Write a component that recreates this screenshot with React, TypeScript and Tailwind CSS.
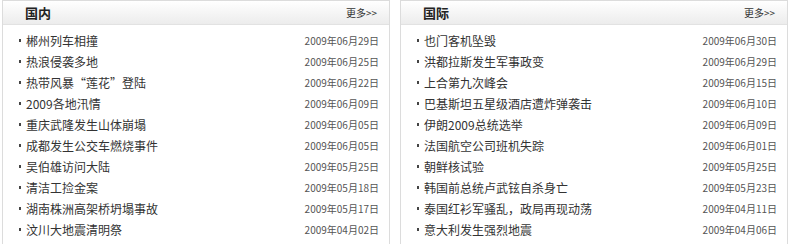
const guonei: [string, string][] = [
  ['郴州列车相撞', '2009年06月29日'],
  ['热浪侵袭多地', '2009年06月25日'],
  ['热带风暴“莲花”登陆', '2009年06月22日'],
  ['2009各地汛情', '2009年06月09日'],
  ['重庆武隆发生山体崩塌', '2009年06月05日'],
  ['成都发生公交车燃烧事件', '2009年06月05日'],
  ['吴伯雄访问大陆', '2009年05月25日'],
  ['清洁工捡金案', '2009年05月18日'],
  ['湖南株洲高架桥坍塌事故', '2009年05月17日'],
  ['汶川大地震清明祭', '2009年04月02日'],
];

const guoji: [string, string][] = [
  ['也门客机坠毁', '2009年06月30日'],
  ['洪都拉斯发生军事政变', '2009年06月29日'],
  ['上合第九次峰会', '2009年06月15日'],
  ['巴基斯坦五星级酒店遭炸弹袭击', '2009年06月10日'],
  ['伊朗2009总统选举', '2009年06月09日'],
  ['法国航空公司班机失踪', '2009年06月01日'],
  ['朝鲜核试验', '2009年05月25日'],
  ['韩国前总统卢武铉自杀身亡', '2009年05月23日'],
  ['泰国红衫军骚乱，政局再现动荡', '2009年04月11日'],
  ['意大利发生强烈地震', '2009年04月06日'],
];

const Panel = ({ title, items }: { title: string; items: [string, string][] }): JSX.Element => {
  return (
    <div className="flex-1 h-[260px] border border-[#dcdcdc] bg-white">
      <div className="h-[24px] flex items-center justify-between pl-[22px] pr-[12px] border-b border-[#e2e2e2] bg-gradient-to-b from-white to-[#ececec]">
        <span className="text-[13px] font-bold text-[#222]">{title}</span>
        <span className="text-[10px] text-[#333]">更多&gt;&gt;</span>
      </div>
      <ul className="pt-[5px] pl-[16px] pr-[10px]">
        {items.map(([t, d]) => (
          <li key={t} className="h-[21px] flex items-center justify-between">
            <span className="flex items-center text-[12px] text-[#333]">
              <span className="w-[2px] h-[3px] bg-[#444] mr-[5px]"></span>
              {t}
            </span>
            <span className="text-[10px] text-[#555]">{d}</span>
          </li>
        ))}
      </ul>
    </div>
  );
};

const App = (): JSX.Element => {
  return (
    <div
      className="w-[790px] h-[244px] overflow-hidden bg-white flex gap-[10px] px-[2px]"
      style={{ fontFamily: '"Noto Sans CJK SC", "Noto Sans", sans-serif' }}
    >
      <Panel title="国内" items={guonei} />
      <Panel title="国际" items={guoji} />
    </div>
  );
};

export default App;
